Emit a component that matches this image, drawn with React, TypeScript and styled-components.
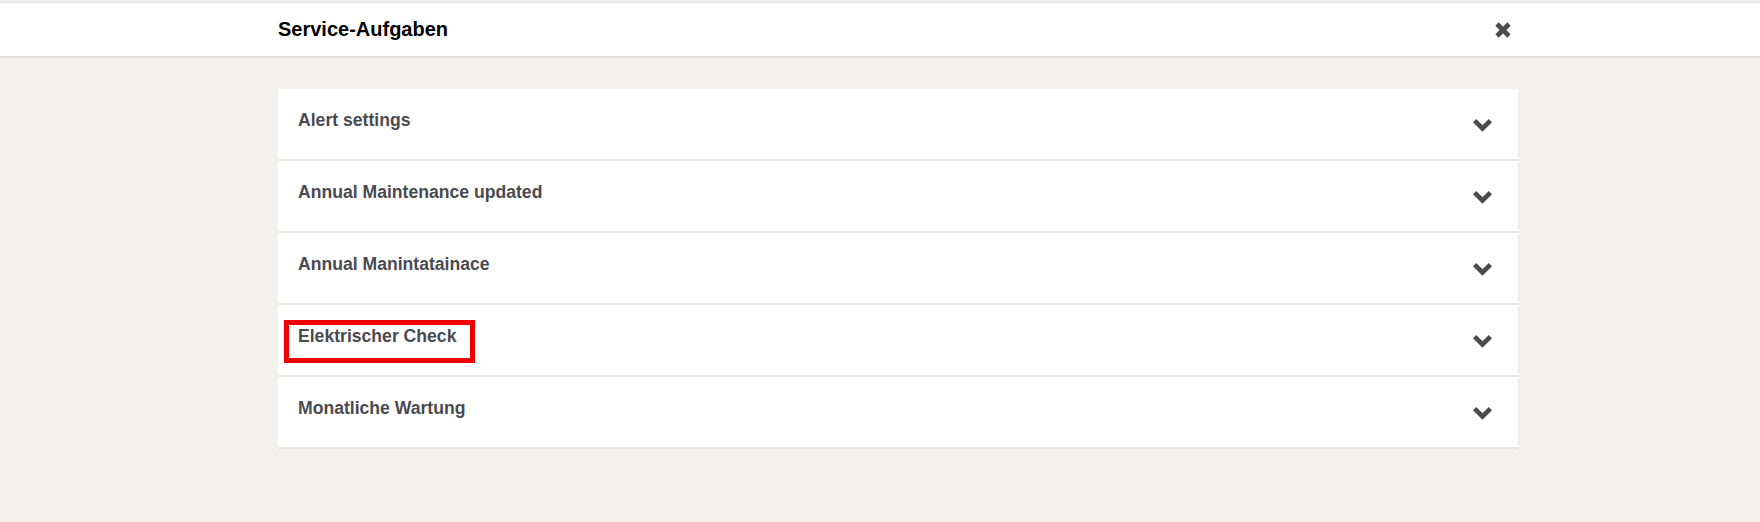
import styled, { createGlobalStyle } from "styled-components";

const GlobalStyle = createGlobalStyle`
    html, body {
        margin: 0;
        padding: 0;
        background-color: #f2f1ef;
        font-family: "Liberation Sans", Arial, sans-serif;
    }
`

const Page = styled.div`
    min-height: 522px;
    padding-top: 2px;
    background-color: #f2f1ef;
`

const Header = styled.header`
    background-color: #ffffff;
    border-top: 1px solid #e3e3e3;
    border-bottom: 2px solid #e4e3df;
`

// the content column sits a bit right of centre
const Column = styled.div`
    width: 1240px;
    margin: 0 242px 0 278px;
`

const HeaderContent = styled(Column)`
    height: 53px;
    display: flex;
    align-items: center;
    justify-content: space-between;
`

const HeaderTitle = styled.h1`
    margin: 0;
    font-size: 20px;
    line-height: 23px;
    font-weight: bold;
    color: #000000;
`

const CloseButton = styled.button`
    border: none;
    background: none;
    padding: 0;
    margin-right: 6px;
    width: 18px;
    height: 18px;
    display: flex;
    cursor: pointer;
`

const Content = styled.main`
    padding-top: 31px;
`

const TaskList = styled(Column)`
    background-color: #ffffff;
`

const TaskRow = styled.div`
    height: 70px;
    box-sizing: content-box;
    border-bottom: 2px solid #e6e5e1;
    display: flex;
    justify-content: space-between;
    padding: 0 25px 0 20px;
    cursor: pointer;
`

const TaskTitle = styled.div<{ $highlighted?: boolean }>`
    position: relative;
    margin-top: 21px;
    align-self: flex-start;
    font-size: 17.6px;
    line-height: 20px;
    font-weight: bold;
    color: #4a4a4f;

    ${props => props.$highlighted && `
        &::after {
            content: "";
            position: absolute;
            left: -14px;
            top: -6px;
            width: 191px;
            height: 43px;
            box-sizing: border-box;
            border: 5px solid #f00000;
        }
    `}
`

const Chevron = styled.svg`
    align-self: center;
    width: 21px;
    height: 14px;
    margin-top: 2px;
`

const ChevronDown = () => (
    <Chevron viewBox="0 0 21 14">
        <polyline points="2.6,2.6 10.5,10.5 18.4,2.6" fill="none" stroke="#4b4b4f" strokeWidth="4.6" strokeLinejoin="miter" />
    </Chevron>
)

const CloseIcon = () => (
    <svg viewBox="0 0 18 18" width="18" height="18">
        <path d="M3 3 L15 15 M15 3 L3 15" fill="none" stroke="#4b4b4f" strokeWidth="4.6" />
    </svg>
)

const tasks = [
    { title: "Alert settings" },
    { title: "Annual Maintenance updated" },
    { title: "Annual Manintatainace" },
    { title: "Elektrischer Check", highlighted: true },
    { title: "Monatliche Wartung" },
]

export default function App() {
    return (
        <Page>
            <GlobalStyle />
            <Header>
                <HeaderContent>
                    <HeaderTitle>Service-Aufgaben</HeaderTitle>
                    <CloseButton aria-label="Schließen">
                        <CloseIcon />
                    </CloseButton>
                </HeaderContent>
            </Header>
            <Content>
                <TaskList>
                    {tasks.map((task, index) => (
                        <TaskRow key={index}>
                            <TaskTitle $highlighted={task.highlighted}>{task.title}</TaskTitle>
                            <ChevronDown />
                        </TaskRow>
                    ))}
                </TaskList>
            </Content>
        </Page>
    )
}
